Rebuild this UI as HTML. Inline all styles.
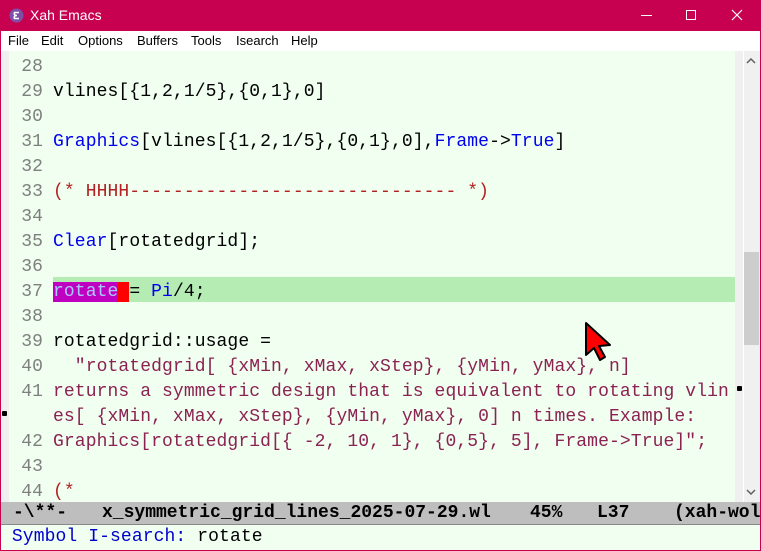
<!DOCTYPE html>
<html><head><meta charset="utf-8"><style>
*{margin:0;padding:0;box-sizing:border-box}
body{width:761px;height:551px;overflow:hidden;background:#c7004f;position:relative;font-family:"Liberation Sans",sans-serif}
#title{position:absolute;left:0;top:0;width:761px;height:31px;background:#c7004f;color:#fff;font-size:14px}
#menu{position:absolute;left:1px;top:31px;width:759px;height:20px;background:#fff;font-size:13px;color:#000}
#menu span{position:absolute;top:2px}
#main{position:absolute;left:1px;top:51px;width:759px;height:451px;background:#f0fff0}
.row{position:absolute;left:0;height:25px;line-height:25px;font-family:"Liberation Mono",monospace;font-size:18px;letter-spacing:0.1px;white-space:pre;color:#000}
.ln{position:absolute;width:42px;text-align:right;color:#7f7f7f}
.tx{position:absolute;left:52px}
.k{color:#0000ee}.c{color:#b22222}.s{color:#8b2252}
#mode{position:absolute;left:1px;top:502px;width:759px;height:23px;background:#bebebe;border-bottom:1px solid #888;font-family:"Liberation Mono",monospace;font-size:18px;line-height:22px;white-space:pre;font-weight:bold;color:#000}
#mode span{position:absolute;top:0}
#mini{position:absolute;left:1px;top:525px;width:759px;height:25px;background:#f0fff0;font-family:"Liberation Mono",monospace;font-size:18px;letter-spacing:0.1px;line-height:25px;white-space:pre}
</style></head><body>
<div id="title">
<svg style="position:absolute;left:9px;top:8px" width="15" height="15"><circle cx="7.5" cy="7.5" r="7" fill="#7d4fa8"/><path d="M10 4.5H5.5Q4.5 7.5 8 7.5Q4.5 7.5 5.5 10.5H10" stroke="#fff" stroke-width="1.6" fill="none"/></svg>
<span style="position:absolute;left:30px;top:7px">Xah Emacs</span>
<div style="position:absolute;left:641px;top:15px;width:11px;height:1px;background:#fff"></div>
<div style="position:absolute;left:686px;top:10px;width:10px;height:10px;border:1px solid #fff"></div>
<svg style="position:absolute;left:731px;top:9px" width="12" height="12"><path d="M1 1L11 11M11 1L1 11" stroke="#fff" stroke-width="1.2"/></svg>
</div>
<div id="menu"><span style="left:7px">File</span><span style="left:40px">Edit</span><span style="left:77px">Options</span><span style="left:136px">Buffers</span><span style="left:190px">Tools</span><span style="left:235px">Isearch</span><span style="left:290px">Help</span></div>
<div id="main">
<div style="position:absolute;left:0;top:0;width:8px;height:451px;background:#f0f0f0"></div>
<div style="position:absolute;left:734px;top:0;width:8px;height:451px;background:#f0f0f0"></div>
<div style="position:absolute;left:742px;top:0;width:17px;height:451px;background:#f0f0f0;border-left:1px solid #fff"></div>
<div style="position:absolute;left:743px;top:201px;width:15px;height:93px;background:#cdcdcd"></div>
<svg style="position:absolute;left:745px;top:7px" width="10" height="6"><path d="M1 5L5 1L9 5" stroke="#606060" stroke-width="1.5" fill="none"/></svg>
<svg style="position:absolute;left:745px;top:438px" width="10" height="6"><path d="M1 1L5 5L9 1" stroke="#606060" stroke-width="1.5" fill="none"/></svg>
<div style="position:absolute;left:52px;top:226px;width:682px;height:25px;background:#b4ecb4"></div>
<div class="row" style="top:4px"><span class="ln">28</span></div>
<div class="row" style="top:29px"><span class="ln">29</span><span class="tx">vlines[{1,2,1/5},{0,1},0]</span></div>
<div class="row" style="top:54px"><span class="ln">30</span></div>
<div class="row" style="top:79px"><span class="ln">31</span><span class="tx"><span class="k">Graphics</span>[vlines[{1,2,1/5},{0,1},0],<span class="k">Frame</span>-&gt;<span class="k">True</span>]</span></div>
<div class="row" style="top:104px"><span class="ln">32</span></div>
<div class="row" style="top:129px"><span class="ln">33</span><span class="tx c">(* HHHH------------------------------ *)</span></div>
<div class="row" style="top:154px"><span class="ln">34</span></div>
<div class="row" style="top:179px"><span class="ln">35</span><span class="tx"><span class="k">Clear</span>[rotatedgrid];</span></div>
<div class="row" style="top:204px"><span class="ln">36</span></div>
<div class="row" style="top:229px"><span class="ln">37</span><span class="tx"><span style="background:#c000c0;color:#a8c8ff">rotate</span><span style="background:#f00"> </span>= <span class="k">Pi</span>/4;</span></div>
<div class="row" style="top:254px"><span class="ln">38</span></div>
<div class="row" style="top:279px"><span class="ln">39</span><span class="tx">rotatedgrid::usage =</span></div>
<div class="row" style="top:304px"><span class="ln">40</span><span class="tx s">  "rotatedgrid[ {xMin, xMax, xStep}, {yMin, yMax}, n]</span></div>
<div class="row" style="top:329px"><span class="ln">41</span><span class="tx s">returns a symmetric design that is equivalent to rotating vlin</span></div>
<div class="row" style="top:354px"><span class="tx s">es[ {xMin, xMax, xStep}, {yMin, yMax}, 0] n times. Example:</span></div>
<div class="row" style="top:379px"><span class="ln">42</span><span class="tx s">Graphics[rotatedgrid[{ -2, 10, 1}, {0,5}, 5], Frame-&gt;True]";</span></div>
<div class="row" style="top:404px"><span class="ln">43</span></div>
<div class="row" style="top:429px"><span class="ln">44</span><span class="tx c">(*</span></div>
<div style="position:absolute;left:736px;top:335px;width:5px;height:5px;background:#000;border-radius:1px"></div>
<div style="position:absolute;left:1px;top:360px;width:5px;height:5px;background:#000;border-radius:1px"></div>
<svg style="position:absolute;left:583px;top:270px" width="30" height="42"><path d="M2 2L2 34L10 27L16 39L21 36L15 25L26 24Z" fill="#f00" stroke="#000" stroke-width="2" stroke-linejoin="round"/></svg>
</div>
<div id="mode"><span style="left:12px">-\**-</span><span style="left:101px">x_symmetric_grid_lines_2025-07-29.wl</span><span style="left:529px">45%</span><span style="left:596px">L37</span><span style="left:673px">(xah-wol</span></div>
<div id="mini"> <span style="color:#0000cd">Symbol I-search:</span> rotate</div>
</body></html>
